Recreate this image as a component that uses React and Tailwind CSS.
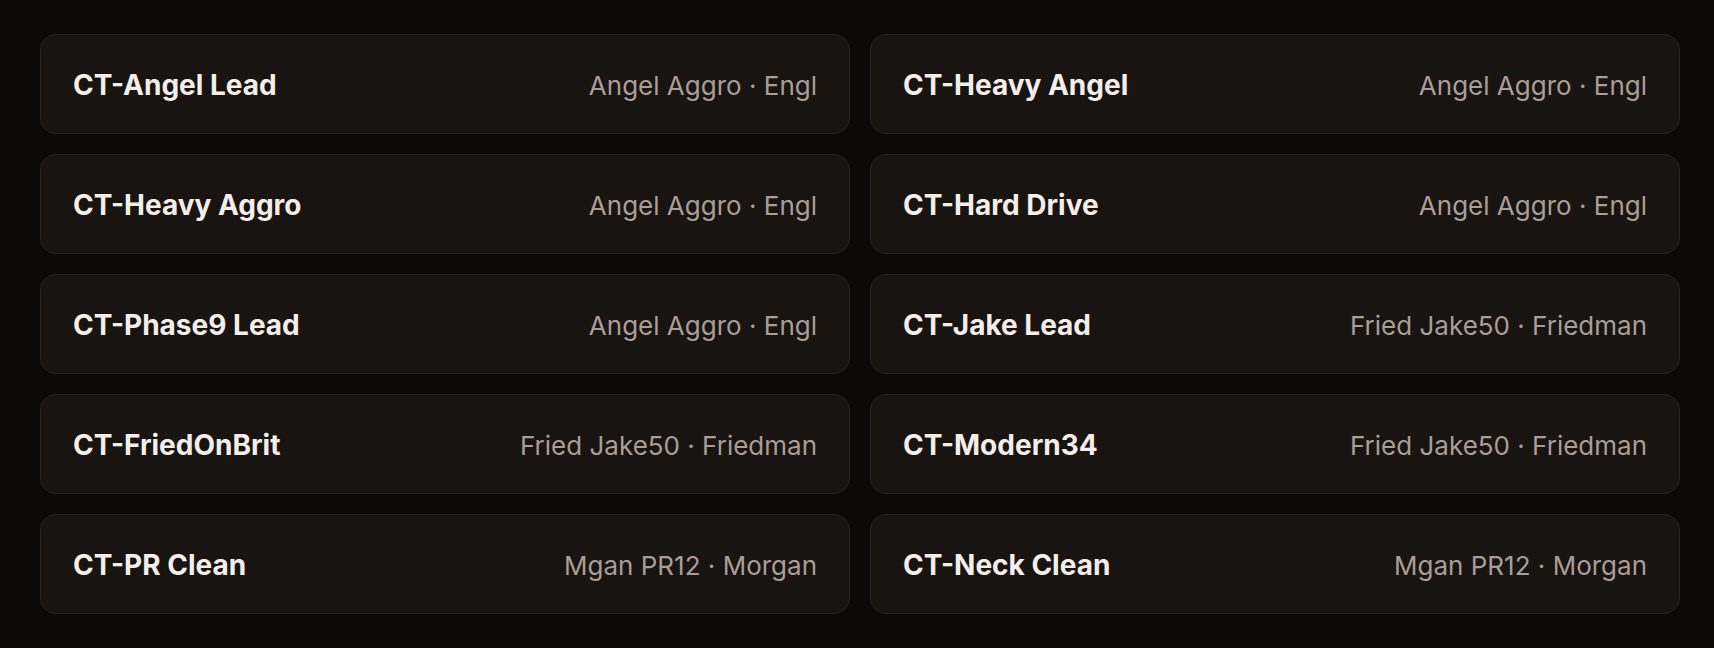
const presets = [
  { name: "CT-Angel Lead", meta: "Angel Aggro · Engl" },
  { name: "CT-Heavy Angel", meta: "Angel Aggro · Engl" },
  { name: "CT-Heavy Aggro", meta: "Angel Aggro · Engl" },
  { name: "CT-Hard Drive", meta: "Angel Aggro · Engl" },
  { name: "CT-Phase9 Lead", meta: "Angel Aggro · Engl" },
  { name: "CT-Jake Lead", meta: "Fried Jake50 · Friedman" },
  { name: "CT-FriedOnBrit", meta: "Fried Jake50 · Friedman" },
  { name: "CT-Modern34", meta: "Fried Jake50 · Friedman" },
  { name: "CT-PR Clean", meta: "Mgan PR12 · Morgan" },
  { name: "CT-Neck Clean", meta: "Mgan PR12 · Morgan" },
];

function PresetCard({ name, meta }) {
  return (
    <div className="h-[100px] flex items-center justify-between px-8 pt-[2px] bg-[#181411] border border-[#2c241f] rounded-[16px]">
      <span className="text-[28px] font-bold text-[#f3eee9]" style={{ fontFamily: "Inter, 'Noto Sans', sans-serif" }}>
        {name}
      </span>
      <span className="text-[26px] text-[#a89e96]" style={{ fontFamily: "Inter, 'Noto Sans', sans-serif" }}>
        {meta}
      </span>
    </div>
  );
}

export default function App() {
  return (
    <div className="min-h-[648px] w-full bg-[#0b0a09] pl-[40px] pr-[34px] py-[34px]">
      <div className="grid grid-cols-2 gap-x-[20px] gap-y-[20px]">
        {presets.map((p) => (
          <PresetCard key={p.name} {...p} />
        ))}
      </div>
    </div>
  );
}
